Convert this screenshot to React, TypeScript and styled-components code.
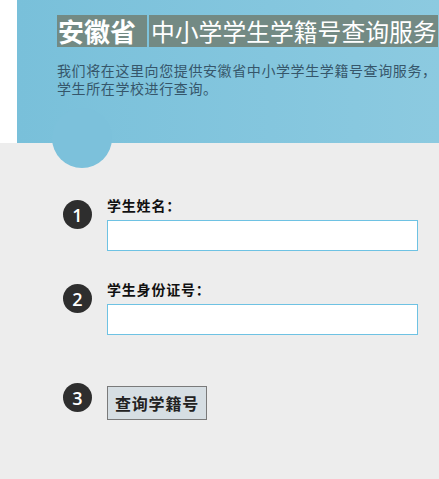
import React from "react";
import styled, { createGlobalStyle } from "styled-components";

const GlobalStyle = createGlobalStyle`
  html, body {
    margin: 0;
    padding: 0;
    background: #ededed;
    overflow: hidden;
  }
  body {
    font-family: "Noto Sans CJK SC", "Noto Sans", sans-serif;
  }
  * { box-sizing: border-box; }
`;

const Page = styled.div`
  width: 439px;
  min-height: 479px;
  background: #ededed;
  overflow: hidden;
`;

const TopBar = styled.div`
  background: #ffffff;
  padding-left: 17px;
`;

const Panel = styled.header`
  position: relative;
  height: 143px;
  padding: 15px 0 0 40px;
  background: linear-gradient(90deg, #79c0da 0%, #84c6de 60%, #8ccae0 100%);

  &::after {
    content: "";
    position: absolute;
    left: 35px;
    top: 108px;
    width: 60px;
    height: 60px;
    border-radius: 50%;
    background: #7cc1db;
  }
`;

const Title = styled.h1`
  display: flex;
  margin: 0;
  height: 32px;
  white-space: nowrap;
  font-weight: normal;
`;

const TitleSeg = styled.span<{ $strong?: boolean }>`
  display: flex;
  align-items: center;
  height: 32px;
  background: #738a84;
  color: #ffffff;
  font-family: "Noto Sans CJK SC", serif;
  font-size: ${(p) => (p.$strong ? "26px" : "23.8px")};
  font-weight: ${(p) => (p.$strong ? 700 : 400)};
  padding: ${(p) => (p.$strong ? "0 11px 0 1px" : "0 1px 0 2px")};
  margin-right: ${(p) => (p.$strong ? "2px" : "0")};
  line-height: 32px;
`;

const Intro = styled.p`
  margin: 14px 0 0;
  font-size: 14px;
  letter-spacing: 0.6px;
  line-height: 18px;
  color: #36566a;
  white-space: nowrap;
`;

const Form = styled.form`
  display: flex;
  flex-direction: column;
  gap: 31px;
  padding: 55px 0 0 63px;
`;

const Step = styled.div<{ $extra?: number }>`
  display: grid;
  grid-template-columns: 29px 1fr;
  column-gap: 15px;
  align-items: start;
  margin-top: ${(p) => p.$extra ?? 0}px;
`;

const Badge = styled.span`
  display: flex;
  align-items: center;
  justify-content: center;
  width: 29px;
  height: 29px;
  margin-top: 2px;
  border-radius: 50%;
  background: #2e2e2e;
  color: #ffffff;
  font-family: "Open Sans", "Noto Sans", sans-serif;
  font-size: 18px;
  font-weight: 600;
  line-height: 1;
`;

const Field = styled.div`
  display: flex;
  flex-direction: column;
  gap: 8px;
`;

const Label = styled.label`
  font-size: 14px;
  font-weight: 700;
  letter-spacing: 0.8px;
  line-height: 14px;
  color: #111111;
`;

const Input = styled.input`
  width: 311px;
  height: 31px;
  border: 1px solid #6ec2e3;
  background: #ffffff;
  outline: none;
  padding: 0 4px;
`;

const Submit = styled.button`
  width: 100px;
  height: 34px;
  margin-top: 5px;
  border: 1px solid #7a7a7a;
  background: #d6dee3;
  color: #222222;
  font-family: "Noto Sans CJK SC", sans-serif;
  font-size: 16px;
  font-weight: 700;
  letter-spacing: 0.8px;
  padding: 0;
  cursor: pointer;
`;

export default function App() {
  return (
    <Page>
      <GlobalStyle />
      <TopBar>
        <Panel>
          <Title>
            <TitleSeg $strong>安徽省</TitleSeg>
            <TitleSeg>中小学学生学籍号查询服务</TitleSeg>
          </Title>
          <Intro>
            我们将在这里向您提供安徽省中小学学生学籍号查询服务，
            <br />
            学生所在学校进行查询。
          </Intro>
        </Panel>
      </TopBar>
      <Form onSubmit={(e) => e.preventDefault()}>
        <Step>
          <Badge>1</Badge>
          <Field>
            <Label htmlFor="name">学生姓名：</Label>
            <Input id="name" type="text" />
          </Field>
        </Step>
        <Step>
          <Badge>2</Badge>
          <Field>
            <Label htmlFor="idno">学生身份证号：</Label>
            <Input id="idno" type="text" />
          </Field>
        </Step>
        <Step $extra={15}>
          <Badge>3</Badge>
          <div>
            <Submit type="submit">查询学籍号</Submit>
          </div>
        </Step>
      </Form>
    </Page>
  );
}
